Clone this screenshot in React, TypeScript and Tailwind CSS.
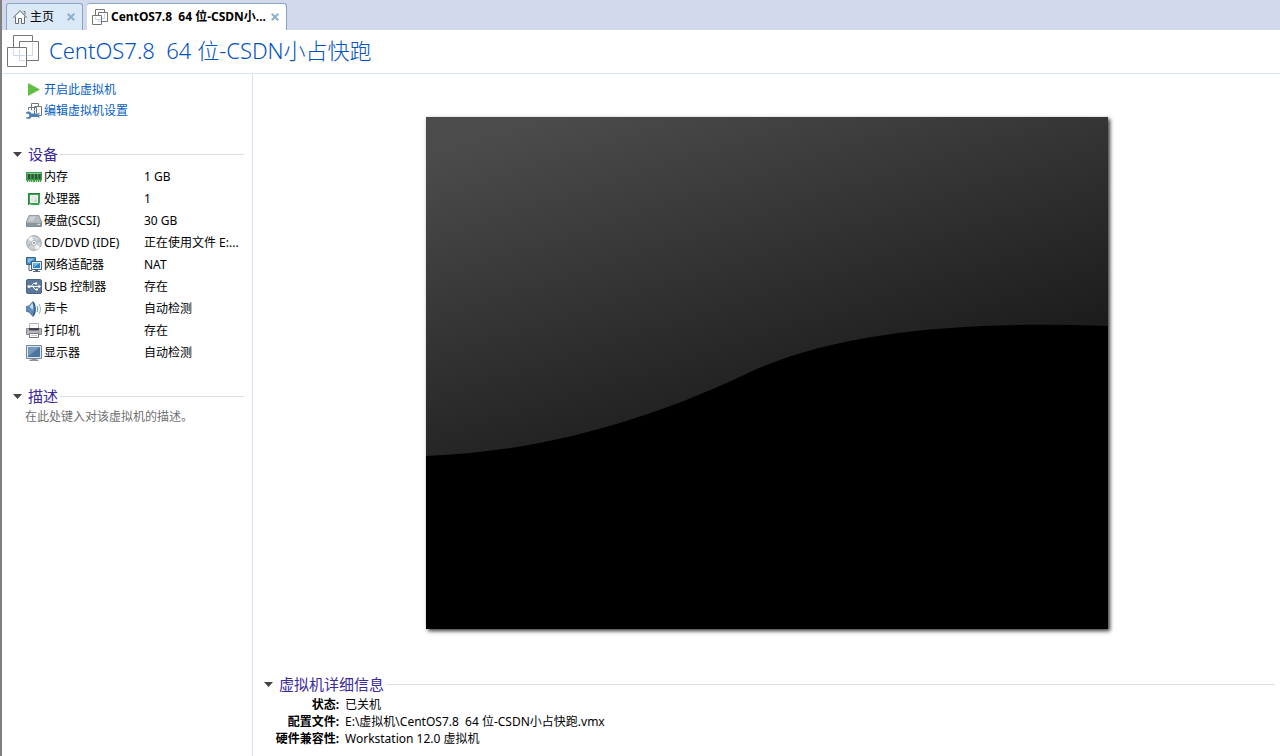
import { useState } from "react";
import type { ReactNode } from "react";

const VM_NAME = "CentOS7.8\u00a0 64 位-CSDN小占快跑";

function HomeIcon() {
  return (
    <svg viewBox="0 0 16 16" className="size-4 shrink-0" fill="none" stroke="#6b6b6b" aria-hidden="true">
      <path d="M3.5 7.5v7h3v-4h3v4h3v-7L8 3.5z" fill="#fff" stroke="none" />
      <path d="M1 8.8 8 1.6l7 7.2M3.5 7.5v7h3v-5h3v5h3v-7" />
      <path d="M11.5 2.5h1.5v3" />
    </svg>
  );
}

function MachineIcon({ className }: { className: string }) {
  return (
    <svg viewBox="0 0 32 32" className={className} fill="none" aria-hidden="true">
      <path d="M6.5.5h19v20h-19z" fill="#fff" stroke="#767676" />
      <path d="M12.5 6.5h19v19h-19z" fill="#fff" stroke="#767676" />
      <path d="M.5 12.5h19v19H.5z" fill="#fff" stroke="#767676" />
      <path d="M6.5 14v6.5H18M12.5 20v5.5H18M12.5 14v6.500M20.5 20.5h5V8" stroke="#cbd9ea" />
    </svg>
  );
}

function SmallMachineIcon() {
  return (
    <svg viewBox="0 0 16 16" className="size-4 shrink-0" fill="none" aria-hidden="true">
      <path d="M3.5.5h9v9h-9z" fill="#fff" stroke="#767676" />
      <path d="M6.5 3.5h9v9h-9z" fill="#fff" stroke="#767676" />
      <path d="M.5 6.5h9v9h-9z" fill="#fff" stroke="#767676" />
      <path d="M3.5 8v2.5H9M6.5 10v2.5H9M10 9.500h2.500V5" stroke="#cbd9ea" />
    </svg>
  );
}

function CloseIcon() {
  return (
    <svg viewBox="0 0 8 8" className="size-2" stroke="#8fb0cc" strokeWidth="2" aria-hidden="true">
      <path d="m.7.7 6.600 6.600M7.300.7.7 7.300" />
    </svg>
  );
}

function Icon({ children }: { children: ReactNode }) {
  return (
    <svg viewBox="0 0 16 16" className="size-4 shrink-0" fill="none" aria-hidden="true">
      {children}
    </svg>
  );
}

const playIcon = (
  <Icon>
    <path d="M2 1 14 7.500 2 14z" fill="#5fbf42" />
  </Icon>
);

const settingsIcon = (
  <Icon>
    <path d="M5.500.5h7v7h-7z" fill="#fff" stroke="#6f7478" />
    <path d="M8.500 3.500h7v9h-7z" fill="#fff" stroke="#6f7478" />
    <path d="M2.500 7V4.500h8V10" stroke="#6f7478" />
    <path d="M5 7.500h5" stroke="#cbd9ea" />
    <path d="M0 9.500C1.500 8 4.500 8.300 5.300 10.500H12l1.500-1v1.500l-2 1.300 2 1.200v1.500l-1.500-1H5.500C4.500 16.200 1.500 16.500 0 15l.2-.8h2.300l1-1.700-1-1.700H.2z" fill="#4a7fb5" />
  </Icon>
);

const memoryIcon = (
  <Icon>
    <path d="M0 3h16v8.500h-1V13H1v-1.500H0z" fill="#37a04b" />
    <path d="M1 4h14v1H1z" fill="#7fd08a" />
    <path d="M2 5h2v5H2zM5.500 5h2v5h-2zM9 5h2v5H9zM12.500 5h2v5h-2z" fill="#3a4a3e" />
    <path d="M2 11.500h1V13H2zM4 11.500h1V13H4zM6 11.500h1V13H6zM9 11.500h1V13H9zM11 11.500h1V13h-1zM13 11.500h1V13h-1z" fill="#d5e8b0" />
  </Icon>
);

const processorIcon = (
  <Icon>
    <path d="M2 2h12v12H2z" fill="#37a04b" />
    <path d="M2 2h12v1H3v11H2z" fill="#22873a" />
    <path d="M4.500 4.500h7v7h-7z" fill="#d3d8d3" stroke="#f4faf4" />
    <path d="M5 5h6v2l-4 4H5z" fill="#e6e9e6" />
    <path d="M3 14h2v-1H3zM13 12h1v2h-1z" fill="#b5dfb6" />
  </Icon>
);

const diskIcon = (
  <Icon>
    <path d="M3 2.500h10L15.500 9H.5z" fill="#b3b9bf" stroke="#858d94" strokeWidth=".8" />
    <path d="M4 3.500h6L7 8H2.300z" fill="#cdd1d5" />
    <path d="M.5 9h15v4.500H.5z" fill="#8b949c" stroke="#737c84" strokeWidth=".8" />
    <path d="M1 9h14" stroke="#dbe0e3" />
    <path d="M11.500 10.800H14v1.200h-2.500z" fill="#c7ead4" />
  </Icon>
);

const discIcon = (
  <Icon>
    <circle cx="8" cy="8" r="7.400" fill="#cdd1d5" stroke="#969ba1" strokeWidth=".8" />
    <path d="M8 8 2 4a7 7 0 0 1 4-2.800zM8 8l6 4a7 7 0 0 1-4 2.800z" fill="#f5f6f8" />
    <path d="m8 8 5.500-4.300A7 7 0 0 1 15 7zM8 8l-5.500 4.300A7 7 0 0 1 1 9z" fill="#b3bdca" />
    <circle cx="8" cy="8" r="2.600" fill="#eef0f2" stroke="#a4aab2" strokeWidth=".7" />
    <circle cx="8" cy="8" r="1" fill="#8994a0" />
  </Icon>
);

const networkIcon = (
  <Icon>
    <path d="M.5.500h9v7h-9z" fill="#3f8fd0" stroke="#3d5f80" />
    <path d="M1.500 1.500h7L2 6z" fill="#8cc4ec" />
    <path d="M3 8v5.500h3" stroke="#4c6176" />
    <path d="M5.500 4.500h10v8h-10z" fill="#e6eff7" stroke="#3d5f80" />
    <path d="M7 6h7v5H7z" fill="#2f83cb" />
    <path d="M7 6h7l-6 4z" fill="#73b5e6" />
    <path d="M9 13h3v1H9zM7 14h7v1H7z" fill="#566b80" />
  </Icon>
);

const usbIcon = (
  <Icon>
    <rect x=".5" y=".5" width="15" height="14" rx="1.500" fill="#5c7898" stroke="#4b6685" />
    <path d="M3 7.500h10M5 7.500l2.500-3h2M7 7.500l2 3h2" stroke="#fff" />
    <circle cx="3" cy="7.500" r="1.500" fill="#fff" />
    <circle cx="10" cy="4.500" r="1.200" fill="#fff" />
    <path d="M12.500 5.500 15 7.500l-2.500 2zM10 9.500h2v2h-2z" fill="#fff" />
  </Icon>
);

const soundIcon = (
  <Icon>
    <path d="M.5 5.500 3 5l4-4.500c2.300 3 2.300 12 0 15L3 11l-2.500-.5c-.4-1.500-.4-3.500 0-5z" fill="#5f8db8" stroke="#38648f" strokeWidth=".8" />
    <path d="M3.500 5.500 6.500 2c.8 3 .8 5 0 7z" fill="#c1dcf0" />
    <path d="M7.500 1.500c2.300 3.500 2.300 9.500 0 13" stroke="#24517c" strokeWidth="1.300" />
    <path d="M11 5c1 2 1 4 0 6" stroke="#4e86b5" />
    <path d="M13 3c1.900 3 1.900 7 0 10" stroke="#8cb4d3" />
  </Icon>
);

const printerIcon = (
  <Icon>
    <path d="M3.500.500h9V6h-9z" fill="#fafafa" stroke="#9a9da4" strokeWidth=".8" />
    <path d="M.5 5.500h15v6H.5z" fill="#b9b7c5" stroke="#8b8894" />
    <path d="M3 5h10v2.500H3z" fill="#44454d" />
    <path d="M12 9h2v1h-2z" fill="#5fc75f" />
    <path d="M3.500 10.500h9v4h-9z" fill="#fff" stroke="#77747f" />
    <path d="M5 12.500h6" stroke="#c7c7cc" />
  </Icon>
);

const displayIcon = (
  <Icon>
    <path d="M.5.500h15v13H.5z" fill="#dde4ea" stroke="#748799" />
    <path d="M2 2h12v10H2z" fill="#4b759d" />
    <path d="M2 2h12L3 10.500H2z" fill="#7699b9" />
    <path d="M6 14h4v.5h2.500V16h-9v-1.500H6z" fill="#8694a1" />
  </Icon>
);

const devices = [
  { name: "内存", value: "1 GB", icon: memoryIcon },
  { name: "处理器", value: "1", icon: processorIcon },
  { name: "硬盘(SCSI)", value: "30 GB", icon: diskIcon },
  { name: "CD/DVD (IDE)", value: "正在使用文件 E:...", icon: discIcon },
  { name: "网络适配器", value: "NAT", icon: networkIcon },
  { name: "USB 控制器", value: "存在", icon: usbIcon },
  { name: "声卡", value: "自动检测", icon: soundIcon },
  { name: "打印机", value: "存在", icon: printerIcon },
  { name: "显示器", value: "自动检测", icon: displayIcon },
];

const details = [
  { label: "状态:", value: "已关机" },
  { label: "配置文件:", value: `E:\\虚拟机\\${VM_NAME}.vmx` },
  { label: "硬件兼容性:", value: "Workstation 12.0 虚拟机" },
];

function Section({ id, title, children }: { id: string; title: string; children: ReactNode }) {
  const [open, setOpen] = useState(true);
  return (
    <section>
      <div className="flex h-[22px] items-center gap-0.5">
        <h2 id={id} className="text-[15px] leading-[22px] text-[#3a2a9c]">
          <button type="button" aria-expanded={open} onClick={() => setOpen(!open)} className="flex items-center gap-1.5">
            <svg viewBox="0 0 9 5" className={open ? "h-[5px] w-[9px]" : "h-[5px] w-[9px] -rotate-90"} aria-hidden="true">
              <path d="M0 0h9L4.500 5z" fill="#444" />
            </svg>
            {title}
          </button>
        </h2>
        <span className="h-px flex-1 bg-[#dedede]" />
      </div>
      {open && children}
    </section>
  );
}

function Preview() {
  return (
    <svg
      viewBox="0 0 682 512"
      className="w-[682px] max-w-full shadow-[2px_2px_4px_rgba(0,0,0,0.8)]"
      role="img"
      aria-label="虚拟机屏幕"
    >
      <defs>
        <linearGradient id="screen" gradientUnits="userSpaceOnUse" x1="12" y1="38" x2="121" y2="382">
          <stop offset="0" stopColor="#4b4b4b" />
          <stop offset="1" stopColor="#1c1c1c" />
        </linearGradient>
      </defs>
      <path d="M0 0h682v512H0z" fill="url(#screen)" />
      <path d="M0 339C112 335 218 305 318 258C410 213 545 204 682 209V512H0z" fill="#000" />
    </svg>
  );
}

export default function App() {
  return (
    <div className="flex min-h-screen flex-col border-l-2 border-[#808080] bg-white font-['Noto_Sans','Noto_Sans_CJK_SC',sans-serif] text-xs text-black">
      <nav aria-label="标签页" className="flex h-[30px] items-end gap-1 bg-[#d3d9ec] pl-1">
        <div className="flex h-[27px] w-[77px] items-center rounded-t-[3px] border border-b-0 border-[#86a6c3] bg-[#dbe8f5] pl-[5px]">
          <button type="button" className="flex flex-1 items-center gap-0.5 whitespace-nowrap">
            <HomeIcon />
            主页
          </button>
          <button type="button" aria-label="关闭主页" className="p-[7px]">
            <CloseIcon />
          </button>
        </div>
        <div className="flex h-[27px] w-[200px] items-center rounded-t-[3px] border-t border-r border-[#86a6c3] bg-white pl-[5px]">
          <button type="button" aria-current="page" className="flex min-w-0 flex-1 items-center gap-[3px] font-bold whitespace-nowrap">
            <SmallMachineIcon />
            {"CentOS7.8\u00a0 64 位-CSDN小..."}
          </button>
          <button type="button" aria-label="关闭虚拟机" className="p-[7px]">
            <CloseIcon />
          </button>
        </div>
      </nav>

      <header className="flex h-11 items-start gap-2.5 border-b border-[#dbe5f1] pt-1 pl-[5px]">
        <MachineIcon className="mt-px size-8" />
        <h1 className="text-[22px] leading-8 font-light whitespace-nowrap text-[#0052bd]">{VM_NAME}</h1>
      </header>

      <div className="flex flex-1">
        <aside className="w-[251px] shrink-0 border-r border-[#d6e3f2] pt-[5px] pr-2">
          <ul className="mb-[22px] pl-6 text-[#0560c4]">
            <li>
              <a href="#start" className="flex h-[21px] items-center gap-0.5">
                {playIcon}
                开启此虚拟机
              </a>
            </li>
            <li>
              <a href="#settings" className="flex h-[21px] items-center gap-0.5">
                {settingsIcon}
                编辑虚拟机设置
              </a>
            </li>
          </ul>

          <div className="flex flex-col gap-[21px] pl-[11px]">
            <Section id="devices" title="设备">
              <table aria-labelledby="devices" className="mt-px ml-[13px] table-fixed border-collapse">
                <tbody>
                  {devices.map((device) => (
                    <tr key={device.name} className="h-[22px]">
                      <th scope="row" className="w-[118px] p-0 text-left font-normal">
                        <span className="flex items-center gap-0.5 whitespace-nowrap">
                          {device.icon}
                          {device.name}
                        </span>
                      </th>
                      <td className="p-0 whitespace-nowrap">{device.value}</td>
                    </tr>
                  ))}
                </tbody>
              </table>
            </Section>

            <Section id="description" title="描述">
              <textarea
                aria-labelledby="description"
                placeholder="在此处键入对该虚拟机的描述。"
                rows={1}
                className="ml-3 block w-[210px] resize-none overflow-hidden leading-5 outline-none placeholder:text-[#707070]"
              />
            </Section>
          </div>
        </aside>

        <main className="flex min-w-0 flex-1 flex-col pb-[9px]">
          <div className="flex flex-1 items-center justify-center pb-0.5">
            <Preview />
          </div>
          <div className="pr-[5px] pl-[11px]">
            <Section id="details" title="虚拟机详细信息">
              <table aria-labelledby="details" className="mt-px border-collapse leading-[17px]">
                <tbody>
                  {details.map((row) => (
                    <tr key={row.label}>
                      <th scope="row" className="w-[75px] p-0 text-right font-bold whitespace-nowrap">
                        {row.label}
                      </th>
                      <td className="py-0 pr-0 pl-1.5">{row.value}</td>
                    </tr>
                  ))}
                </tbody>
              </table>
            </Section>
          </div>
        </main>
      </div>
    </div>
  );
}
